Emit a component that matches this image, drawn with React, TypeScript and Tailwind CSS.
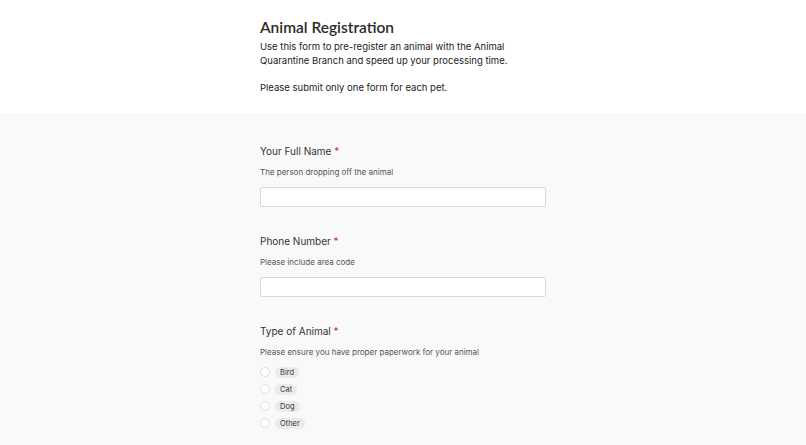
const fields = [
  { label: 'Your Full Name', help: 'The person dropping off the animal' },
  { label: 'Phone Number', help: 'Please include area code' },
]

const animals = ['Bird', 'Cat', 'Dog', 'Other']

function Label({ text }: { text: string }) {
  return (
    <div className="text-[10px] leading-[14px] text-[#333]">
      {text} <span className="text-[#d6245a]">*</span>
    </div>
  )
}

export default function App() {
  return (
    <div className="min-h-[445px] bg-[#f9f9f9] font-['Inter',sans-serif]">
      {/* Header */}
      <div className="bg-white pt-[18px] pb-[18px]">
        <div className="mx-auto w-[286px]">
          <h1 className="font-['Lato',sans-serif] text-[15.5px] font-semibold leading-[18px] text-[#2b2b2b]">
            Animal Registration
          </h1>
          <p className="mt-[4px] text-[9.5px] leading-[14px] text-[#222]">
            Use this form to pre-register an animal with the Animal
            <br />
            Quarantine Branch and speed up your processing time.
          </p>
          <p className="mt-[13px] text-[9.5px] leading-[14px] text-[#222]">Please submit only one form for each pet.</p>
        </div>
      </div>

      {/* Form */}
      <div className="mx-auto w-[286px] pt-[31px]">
        {fields.map((f) => (
          <div key={f.label} className="mb-[27px]">
            <Label text={f.label} />
            <div className="mt-[8px] text-[8px] leading-[12px] text-[#555]">{f.help}</div>
            <div className="mt-[9px] h-[20px] rounded-[2px] border border-[#d9d9d9] bg-white" />
          </div>
        ))}

        <div>
          <Label text="Type of Animal" />
          <div className="mt-[8px] text-[8px] leading-[12px] text-[#555]">
            Please ensure you have proper paperwork for your animal
          </div>
          <div className="mt-[8px] flex flex-col gap-[5px]">
            {animals.map((a) => (
              <div key={a} className="flex h-[12px] items-center gap-[5px]">
                <span className="h-[10px] w-[10px] rounded-full border border-[#dedede] bg-white" />
                <span className="rounded-[6px] bg-[#ebebeb] px-[5px] text-[7.5px] leading-[11px] text-[#333]">{a}</span>
              </div>
            ))}
          </div>
        </div>
      </div>
    </div>
  )
}
